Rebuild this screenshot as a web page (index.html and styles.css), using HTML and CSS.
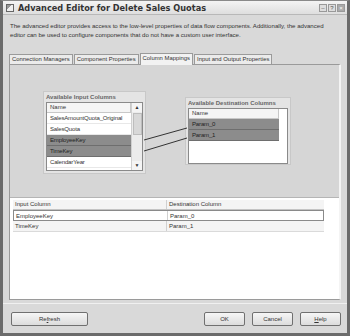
FILE: index.html
```html
<!DOCTYPE html>
<html lang="en">
<head>
  <meta charset="UTF-8">
  <title>Advanced Editor for Delete Sales Quotas</title>
  <link rel="stylesheet" href="styles.css">
</head>
<body>

<div class="window">
  <div class="titlebar">
    <span class="app-icon"></span>
    <span class="title">Advanced Editor for Delete Sales Quotas</span>
    <span class="winbtns">
      <span class="wb">&#8211;</span><span class="wb">?</span><span class="wb close">&#215;</span>
    </span>
  </div>

  <div class="content">
    <p class="desc">The advanced editor provides access to the low-level properties of data flow components. Additionally, the advanced editor can be used to configure components that do not have a custom user interface.</p>

    <div class="tabs">
      <div class="tab">Connection Managers</div>
      <div class="tab">Component Properties</div>
      <div class="tab active">Column Mappings</div>
      <div class="tab">Input and Output Properties</div>
    </div>

    <div class="panel">
      <div class="canvas">
        <div class="colbox inbox">
          <div class="boxtitle">Available Input Columns</div>
          <div class="listwrap">
            <div class="list">
              <div class="lh">Name</div>
              <div class="li">SalesAmountQuota_Original</div>
              <div class="li">SalesQuota</div>
              <div class="li sel">EmployeeKey</div>
              <div class="li sel">TimeKey</div>
              <div class="li">CalendarYear</div>
              <div class="li">CalendarQuarter</div>
            </div>
            <div class="vscroll">
              <span class="arr">&#9650;</span>
              <span class="thumb"></span>
              <span class="arr">&#9660;</span>
            </div>
          </div>
        </div>

        <div class="colbox outbox">
          <div class="boxtitle">Available Destination Columns</div>
          <div class="list">
            <div class="lh">Name</div>
            <div class="li sel">Param_0</div>
            <div class="li sel">Param_1</div>
          </div>
        </div>

        <svg class="links" width="330" height="133">
          <line x1="134" y1="75" x2="177" y2="63" stroke="#333" stroke-width="1"/>
          <line x1="134" y1="86" x2="177" y2="73" stroke="#333" stroke-width="1"/>
        </svg>
      </div>

      <div class="grid">
        <div class="gr gh">
          <div class="c1">Input Column</div>
          <div class="c2">Destination Column</div>
        </div>
        <div class="gr first">
          <div class="c1">EmployeeKey</div>
          <div class="c2">Param_0</div>
        </div>
        <div class="gr alt">
          <div class="c1">TimeKey</div>
          <div class="c2">Param_1</div>
        </div>
      </div>
    </div>

    <div class="footer">
      <button class="btn wide">Re<u>f</u>resh</button>
      <span class="spacer"></span>
      <button class="btn">OK</button>
      <button class="btn">Cancel</button>
      <button class="btn"><u>H</u>elp</button>
    </div>
  </div>
</div>

</body>
</html>
```

FILE: styles.css
```css
* { box-sizing: border-box; }
body {
  margin: 0;
  background: #fff;
  font-family: "Liberation Sans", Arial, sans-serif;
  font-size: 6px;
  color: #222;
}
.window {
  width: 350px;
  height: 336px;
  border: 3px solid #6b6b6b;
  border-top: 1px solid #8a8a8a;
  background: #d9d9d9;
  display: flex;
  flex-direction: column;
}
.titlebar {
  height: 17px;
  display: flex;
  align-items: center;
  padding: 0 2px 0 3px;
  background: linear-gradient(#f4f4f4, #dedede);
  border-bottom: 1px solid #b8b8b8;
}
.app-icon {
  width: 8px;
  height: 8px;
  border: 1px solid #666;
  background: linear-gradient(135deg, #999 40%, #eee 40%);
  margin-right: 4px;
}
.title {
  font-family: "DejaVu Sans", sans-serif;
  font-weight: bold;
  font-size: 8.2px;
  color: #333;
  flex: 1;
}
.winbtns { display: flex; gap: 1px; }
.wb {
  width: 8px;
  height: 8px;
  border: 1px solid #999;
  background: #ddd;
  font-size: 6px;
  line-height: 6px;
  text-align: center;
  color: #555;
}
.wb.close { background: #aaa; color: #fff; }
.content {
  flex: 1;
  display: flex;
  flex-direction: column;
  padding: 0 0 0 5px;
}
.desc {
  margin: 6px 0 0 2px;
  width: 318px;
  line-height: 9px;
  font-size: 6.1px;
  color: #333;
}
.tabs {
  display: flex;
  align-items: flex-end;
  margin: 13px 0 0 1px;
  height: 12px;
}
.tab {
  height: 10px;
  padding: 0 2px;
  border: 1px solid #9a9a9a;
  border-bottom: none;
  background: #ebebeb;
  margin-right: 1px;
  line-height: 9px;
  font-size: 5.9px;
  color: #333;
  white-space: nowrap;
}
.tab.active {
  height: 12px;
  background: #f2f2f2;
  position: relative;
  top: 1px;
}
.panel {
  width: 332px;
  height: 236px;
  border: 1px solid #9a9a9a;
  border-right: 2px solid #f4f4f4;
  display: flex;
  flex-direction: column;
  margin-left: 1px;
}
.canvas {
  position: relative;
  height: 133px;
  background: #d6d6d6;
  border-bottom: 1px solid #b5b5b5;
}
.colbox {
  position: absolute;
  background: #e4e4e4;
  border: 1px solid #c8c8c8;
  padding: 0 2px 2px 2px;
}
.boxtitle {
  font-weight: bold;
  font-size: 6px;
  color: #666;
  height: 10px;
  line-height: 10px;
  white-space: nowrap;
}
.inbox { left: 33px; top: 26px; width: 103px; height: 83px; }
.outbox { left: 175px; top: 32px; width: 106px; height: 68px; }
.listwrap {
  display: flex;
  height: 69px;
  border: 1px solid #8a8a8a;
  background: #fff;
  overflow: hidden;
}
.listwrap .list { flex: 1; }
.list {
  background: #fff;
  overflow: hidden;
}
.outbox .list {
  height: 56px;
  border: 1px solid #8a8a8a;
  padding-right: 8px;
}
.lh {
  height: 10px;
  line-height: 9px;
  padding-left: 3px;
  background: #f5f5f5;
  border-bottom: 1px solid #c8c8c8;
  border-right: 1px solid #c8c8c8;
  color: #333;
}
.li {
  height: 11px;
  line-height: 10px;
  padding-left: 3px;
  border-bottom: 1px solid #e8e8e8;
  color: #333;
  white-space: nowrap;
  letter-spacing: -0.15px;
}
.li.sel {
  background: #8c8c8c;
  border-bottom-color: #6e6e6e;
  color: #1e1e1e;
}
.vscroll {
  width: 11px;
  display: flex;
  flex-direction: column;
  background: #ececec;
  border-left: 1px solid #d0d0d0;
  align-items: center;
}
.arr {
  height: 9px;
  font-size: 5px;
  line-height: 9px;
  color: #333;
  width: 10px;
  text-align: center;
  background: #f4f4f4;
}
.thumb {
  flex: 1;
  width: 9px;
  margin: 1px 0 26px;
  background: #d8d8d8;
  border: 1px solid #bdbdbd;
}
.links { position: absolute; left: 0; top: 0; }
.grid {
  flex: 1;
  background: #fff;
  padding: 2px 15px 0 3px;
}
.gr {
  display: flex;
  height: 11px;
  line-height: 10px;
  color: #333;
}
.gr .c1 { width: 154px; padding-left: 2px; border-right: 1px solid #d0d0d0; }
.gr .c2 { flex: 1; padding-left: 2px; }
.gh { background: #f4f4f4; border-bottom: 1px solid #c4c4c4; height: 10px; line-height: 9px; }
.first { border: 1px solid #8a8a8a; }
.alt { background: #f4f4f4; border-bottom: 1px solid #dadada; }
.footer {
  height: 30px;
  display: flex;
  align-items: center;
  gap: 7px;
  padding: 0 6px 0 8px;
  border-top: 1px solid #f0f0f0;
  margin-top: 3px;
  margin-left: -5px;
}
.spacer { flex: 1; }
.btn {
  width: 41px;
  height: 14px;
  padding: 0;
  font-family: "Liberation Sans", Arial, sans-serif;
  font-size: 6px;
  color: #333;
  border: 1px solid #707070;
  border-radius: 2px;
  background: linear-gradient(#f6f6f6, #dcdcdc);
}
.btn.wide { width: 77px; }
```
